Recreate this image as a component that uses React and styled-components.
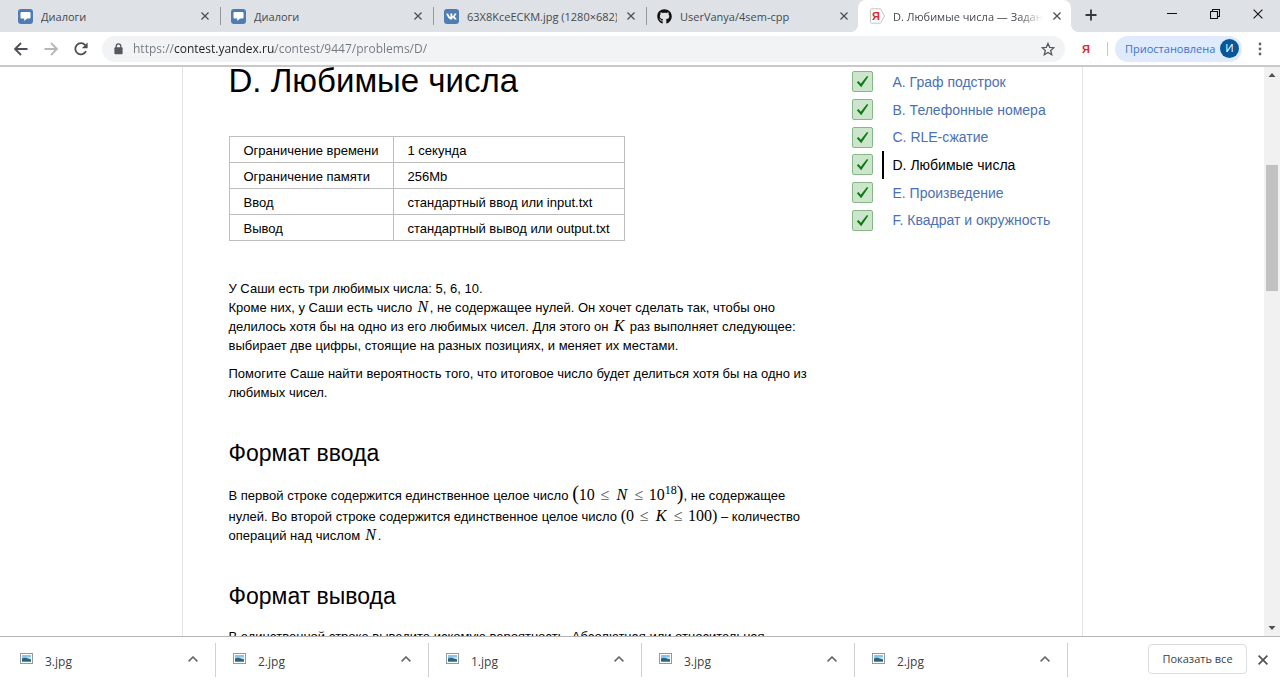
import React from "react";
import styled, { createGlobalStyle, css } from "styled-components";
import { FaGithub, FaVk } from "react-icons/fa";

const ui = `"Open Sans", "Noto Sans", sans-serif`;
const body = `"Liberation Sans", Arial, sans-serif`;
const serif = `"Liberation Serif", "Times New Roman", serif`;

const GlobalStyle = createGlobalStyle`
  * { box-sizing: border-box; }
  html, body, #root { height: 100%; }
  body { margin: 0; background: #fff; font-family: ${body}; color: #000; }
  button { border: 0; padding: 0; background: none; font: inherit; color: inherit; }
  svg { display: block; flex: none; }
`;

const Browser = styled.div`
  display: flex;
  flex-direction: column;
  height: 100vh;
  overflow: hidden;
`;

/* ---------- tab strip ---------- */

const TabStrip = styled.header`
  display: flex;
  height: 32px;
  flex: none;
  padding: 0 1px 0 6px;
  background: #dee1e6;
  font-family: ${ui};
  font-size: 11px;
  color: #45494e;
`;

const Tab = styled.div`
  display: flex;
  align-items: center;
  gap: 8px;
  flex: 0 1 213px;
  min-width: 0;
  position: relative;
  padding: 0 8px 0 12px;
  ${({ $active }) =>
    $active &&
    css`
      background: #fff;
      border-radius: 8px 8px 0 0;
      &::before,
      &::after {
        content: "";
        position: absolute;
        bottom: 0;
        width: 8px;
        height: 8px;
      }
      &::before {
        left: -8px;
        background: radial-gradient(circle at 0 0, #dee1e6 8px, #fff 8px);
      }
      &::after {
        right: -8px;
        background: radial-gradient(circle at 100% 0, #dee1e6 8px, #fff 8px);
      }
    `}
`;

const TabDivider = styled.span`
  position: absolute;
  right: -2px;
  top: 7px;
  width: 1px;
  height: 18px;
  background: #93969b;
`;

const TabTitle = styled.span`
  flex: 1;
  min-width: 0;
  overflow: hidden;
  white-space: nowrap;
  ${({ $fade }) =>
    $fade && css`mask-image: linear-gradient(to left, transparent, #000 24px);`}
`;

const IconButton = styled.button`
  display: flex;
  align-items: center;
  justify-content: center;
  flex: none;
  width: ${({ $w }) => $w || 12}px;
  height: ${({ $h }) => $h || 30}px;
  color: ${({ $color }) => $color || "#4c4f54"};
`;

const WindowControls = styled.div`
  display: flex;
  margin-left: auto;
  height: 28px;
  color: #111;
`;

const BlueBadge = styled.span`
  display: flex;
  align-items: center;
  justify-content: center;
  flex: none;
  width: 15px;
  height: 15px;
  border-radius: 3px;
  background: #4f7db3;
  color: #fff;
`;

/* ---------- toolbar ---------- */

const Toolbar = styled.div`
  display: flex;
  align-items: center;
  flex: none;
  height: 35px;
  padding: 0 2px 0 6px;
  background: #fff;
  border-bottom: 2px solid #c9c9c9;
  font-family: ${ui};
`;

const Omnibox = styled.form`
  display: flex;
  align-items: center;
  flex: 1;
  min-width: 0;
  height: 26px;
  margin-left: 6px;
  padding: 0 7px 0 12px;
  gap: 10px;
  border-radius: 13px;
  background: #f1f3f4;
`;

const Address = styled.input`
  flex: 1;
  min-width: 0;
  height: 26px;
  padding: 0;
  border: 0;
  outline: 0;
  font-family: ${ui};
  font-size: 12px;
  background: linear-gradient(90deg, #73777c 41px, #202124 41px, #202124 142px, #73777c 142px);
  background-clip: text;
  -webkit-background-clip: text;
  -webkit-text-fill-color: transparent;
`;

const Divider = styled.span`
  width: 1px;
  height: 14px;
  margin-right: 7px;
  background: #c4c7cb;
`;

const Profile = styled.button`
  && {
    display: flex;
    align-items: center;
    justify-content: space-between;
    width: 127px;
    height: 26px;
    padding: 0 3px 0 10px;
    border-radius: 13px;
    background: #dfeafc;
    color: #3a72d0;
    font-size: 11px;
    white-space: nowrap;
  }
`;

const Avatar = styled.span`
  flex: none;
  width: 19px;
  height: 19px;
  border-radius: 50%;
  background: #07579b;
  color: #fff;
  font-size: 11px;
  line-height: 18px;
  text-align: center;
`;

const YandexMark = styled.span`
  color: #e3262b;
  font: bold 11px ${body};
`;

/* ---------- page ---------- */

const Viewport = styled.div`
  display: flex;
  flex: 1;
  min-height: 0;
`;

const Page = styled.div`
  flex: 1;
  min-width: 0;
  overflow: hidden;
`;

const Sheet = styled.div`
  display: flex;
  align-items: flex-start;
  max-width: 901px;
  min-height: 100%;
  margin: 0 auto;
  padding: 0 20px 0 46px;
  gap: 32px;
  border: solid #e4e4e4;
  border-width: 0 1px;
`;

const Problem = styled.main`
  flex: 1;
  min-width: 0;
  font-size: 13px;
  line-height: 19px;
`;

const Title = styled.h1`
  margin: 0 0 41px;
  font-size: 33px;
  font-weight: 400;
  line-height: 28px;
`;

const Limits = styled.table`
  margin-bottom: 38px;
  border-collapse: collapse;
  line-height: 17px;
  th, td {
    height: 26px;
    padding: 5px 14px 3px 14px;
    border: 1px solid #bdbdbd;
    font-weight: 400;
    text-align: left;
  }
`;

const Heading = styled.h2`
  margin: 37px 0 17px;
  font-size: 23px;
  font-weight: 400;
  line-height: 28px;
`;

const Text = styled.p`
  margin: 0 0 9px;
`;

const Formula = styled.span`
  font-family: ${serif};
  font-size: 16px;
  line-height: 16px;
  white-space: nowrap;
  ${({ $tall }) => $tall && css`display: inline-block; line-height: 21px;`}
  sup {
    font-size: 12px;
    line-height: 0;
  }
`;

const BigParen = styled.span`
  font-size: 20px;
  line-height: 16px;
`;

const Variable = styled.i`
  display: inline-block;
  width: 14px;
  text-align: center;
`;

const Relation = styled.span`
  display: inline-block;
  width: 20px;
  text-align: center;
  color: #555;
`;

const ProblemList = styled.nav`
  display: grid;
  grid-template-rows: repeat(6, minmax(0, 1fr));
  flex: none;
  width: 210px;
  height: 166px;
  margin-top: 1px;
  font-size: 14px;
`;

const ProblemRow = styled.div`
  display: flex;
  align-items: center;
  gap: 9px;
`;

const Solved = styled.span`
  display: flex;
  align-items: center;
  justify-content: center;
  width: 21px;
  height: 21px;
  border: 1px solid #86b886;
  border-radius: 2px;
  background: #cce5cc;
`;

const ProblemLink = styled.a`
  padding-left: 9px;
  border-left: 2px solid ${({ $current }) => ($current ? "#000" : "transparent")};
  color: ${({ $current }) => ($current ? "#000" : "#4a70b5")};
  line-height: 28px;
  text-decoration: none;
  white-space: nowrap;
`;

/* ---------- scrollbar ---------- */

const Scrollbar = styled.div`
  display: flex;
  flex-direction: column;
  flex: none;
  width: 16px;
  padding: 0 2px;
  background: #f1f1f1;
  color: #505050;
`;

const Track = styled.div`
  flex: ${({ $part }) => $part} 1 0;
`;

const Thumb = styled(Track)`
  background: #c1c1c1;
`;

/* ---------- downloads ---------- */

const Downloads = styled.footer`
  display: flex;
  align-items: center;
  flex: none;
  height: 46px;
  padding: 0 9px 0 3px;
  border-top: 1px solid #b5b5b5;
  background: #fff;
  font-family: ${ui};
  font-size: 12px;
  color: #3c4043;
`;

const Download = styled.div`
  display: flex;
  align-items: center;
  flex: 0 1 213px;
  min-width: 0;
  height: 34px;
  padding: 0 16px 2px 17px;
  border-right: 1px solid #d0d0d0;
`;

const FileName = styled.span`
  flex: 1;
  padding: 6px 0 0 12px;
`;

const ShowAll = styled.button`
  && {
    width: 99px;
    height: 30px;
    margin: 0 8px 2px auto;
    border: 1px solid #dadce0;
    border-radius: 4px;
    font-size: 11px;
    font-weight: 500;
    white-space: nowrap;
  }
`;

/* ---------- drawings ---------- */

const Cross = ({ size = 8, weight = 1.6 }) => (
  <svg width={size} height={size} viewBox="0 0 10 10" stroke="currentColor" strokeWidth={weight} fill="none">
    <path d="M.6.6l8.8 8.8M9.4.6L.6 9.4" />
  </svg>
);

const Arrow = ({ flip }) => (
  <svg width="14" height="14" viewBox="0 0 14 14" fill="none" stroke="currentColor" strokeWidth="1.8">
    <path d={flip ? "M.5 7h12M7 1l6 6-6 6" : "M13.5 7h-12M7 1L1 7l6 6"} />
  </svg>
);

const Reload = () => (
  <svg width="14" height="14" viewBox="0 0 14 14" fill="none" stroke="currentColor" strokeWidth="1.8">
    <path d="M12 9.2A5.6 5.6 0 1 1 11.2 3.2" />
    <path d="M13.6.4v5.8H7.8z" fill="currentColor" stroke="none" />
  </svg>
);

const Lock = () => (
  <svg width="9" height="12" viewBox="0 0 9 12">
    <path d="M2.2 5V3.2a2.3 2.3 0 0 1 4.6 0V5" fill="none" stroke="#55585c" strokeWidth="1.3" />
    <rect x=".4" y="4.3" width="8.2" height="7" rx="1" fill="#55585c" />
  </svg>
);

const Star = () => (
  <svg width="14" height="14" viewBox="0 0 14 14" fill="none" stroke="#55585c" strokeWidth="1.3">
    <path d="M7 1.4l1.7 3.9 4.2.4-3.2 2.8 1 4.2L7 10.5l-3.7 2.2 1-4.2L1.1 5.7l4.2-.4z" />
  </svg>
);

const Plus = () => (
  <svg width="12" height="12" viewBox="0 0 12 12" stroke="#34373b" strokeWidth="1.8">
    <path d="M6 .5v11M.5 6h11" />
  </svg>
);

const Kebab = () => (
  <svg width="4" height="14" viewBox="0 0 4 14" fill="#5f6368">
    <circle cx="2" cy="2" r="1.4" />
    <circle cx="2" cy="7" r="1.4" />
    <circle cx="2" cy="12" r="1.4" />
  </svg>
);

const Minimize = () => (
  <svg width="10" height="10" viewBox="0 0 10 10" stroke="currentColor">
    <path d="M0 4.5h10" />
  </svg>
);

const Restore = () => (
  <svg width="10" height="10" viewBox="0 0 10 10" fill="none" stroke="currentColor" strokeWidth="1.1">
    <path d="M.5 2.5h7v7h-7zM2.5 2.5v-2h7v7h-2" />
  </svg>
);

const Chevron = () => (
  <svg width="10" height="6" viewBox="0 0 10 6" fill="none" stroke="#5f6368" strokeWidth="1.5">
    <path d="M.6 5.4L5 1l4.400 4.400" />
  </svg>
);

const ScrollArrow = ({ down }) => (
  <svg width="12" height="16" viewBox="0 0 12 16" fill="currentColor">
    <path d={down ? "M2.500 6h7L6 10z" : "M2.500 10h7L6 6z"} />
  </svg>
);

const CheckMark = () => (
  <svg width="13" height="13" viewBox="0 0 13 13">
    <path d="M.8 7.300l1.700-1.200 2.300 2.600L11 1l1.300.7L5.200 12.300z" fill="#0a7d12" />
  </svg>
);

const Picture = () => (
  <svg width="13" height="11" viewBox="0 0 13 11">
    <rect x=".5" y=".5" width="12" height="10" fill="#fff" stroke="#8f9aa5" />
    <rect x="2" y="2" width="9" height="7" fill="#8fc4ea" />
    <path d="M2 5.500l3-.8 6 1.600V9H2z" fill="#28667a" />
    <path d="M6 4.500h5v1.800z" fill="#dff0f8" />
    <path d="M2 8h9v1H2z" fill="#4f93c8" />
  </svg>
);

const Bubble = () => (
  <svg width="11" height="11" viewBox="0 0 11 11" fill="#fff">
    <path d="M1.500 1h8Q10.500 1 10.500 2v4.500q0 1-1 1H7L4.300 10V7.500H1.500q-1 0-1-1V2q0-1 1-1z" />
  </svg>
);

const YandexTag = () => (
  <svg width="15" height="16" viewBox="0 0 15 16">
    <path d="M1.500.8h9l4 7.200-4 7.200h-9q-1 0-1-1V1.800q0-1 1-1z" fill="#fff" stroke="#c3c3c3" />
    <text x="2" y="12" fill="#e0262b" fontFamily="Liberation Sans, sans-serif" fontSize="11" fontWeight="700">Я</text>
  </svg>
);

/* ---------- data ---------- */

const dialogs = <BlueBadge><Bubble /></BlueBadge>;

const tabs = [
  { title: "Диалоги", icon: dialogs, divider: true },
  { title: "Диалоги", icon: dialogs, divider: true },
  { title: "63X8KceECKM.jpg (1280×682)", icon: <BlueBadge><FaVk size={11} /></BlueBadge>, divider: true },
  { title: "UserVanya/4sem-cpp", icon: <FaGithub size={15} color="#111" /> },
  { title: "D. Любимые числа — Задания", icon: <YandexTag />, active: true },
];

const limits = [
  ["Ограничение времени", "1 секунда"],
  ["Ограничение памяти", "256Mb"],
  ["Ввод", "стандартный ввод или input.txt"],
  ["Вывод", "стандартный вывод или output.txt"],
];

const problems = [
  "A. Граф подстрок",
  "B. Телефонные номера",
  "C. RLE-сжатие",
  "D. Любимые числа",
  "E. Произведение",
  "F. Квадрат и окружность",
];

const files = ["3.jpg", "2.jpg", "1.jpg", "3.jpg", "2.jpg"];

const Var = ({ children }) => (
  <Formula><Variable>{children}</Variable></Formula>
);

export default function App() {
  return (
    <Browser>
      <GlobalStyle />
      <TabStrip>
        {tabs.map((tab, i) => (
          <Tab key={i} $active={tab.active}>
            {tab.icon}
            <TabTitle $fade={tab.active}>{tab.title}</TabTitle>
            <IconButton aria-label="Закрыть вкладку"><Cross /></IconButton>
            {tab.divider && <TabDivider />}
          </Tab>
        ))}
        <IconButton $w={40} aria-label="Новая вкладка"><Plus /></IconButton>
        <WindowControls>
          <IconButton $w={43} $h={28} $color="#111" aria-label="Свернуть"><Minimize /></IconButton>
          <IconButton $w={43} $h={28} $color="#111" aria-label="Восстановить"><Restore /></IconButton>
          <IconButton $w={43} $h={28} $color="#111" aria-label="Закрыть"><Cross size={10} weight={1.1} /></IconButton>
        </WindowControls>
      </TabStrip>

      <Toolbar>
        <IconButton $w={30} aria-label="Назад"><Arrow /></IconButton>
        <IconButton $w={30} $color="#b5b7ba" aria-label="Вперёд"><Arrow flip /></IconButton>
        <IconButton $w={30} aria-label="Обновить"><Reload /></IconButton>
        <Omnibox onSubmit={(e) => e.preventDefault()}>
          <Lock />
          <Address aria-label="Адрес" defaultValue="https://contest.yandex.ru/contest/9447/problems/D/" />
          <IconButton type="button" $w={20} $h={26} aria-label="В закладки"><Star /></IconButton>
        </Omnibox>
        <IconButton $w={42} aria-label="Яндекс"><YandexMark>Я</YandexMark></IconButton>
        <Divider />
        <Profile>
          Приостановлена
          <Avatar>И</Avatar>
        </Profile>
        <IconButton $w={36} aria-label="Меню"><Kebab /></IconButton>
      </Toolbar>

      <Viewport>
        <Page>
          <Sheet>
            <Problem>
              <Title>D. Любимые числа</Title>
              <Limits>
                <tbody>
                  {limits.map(([name, value]) => (
                    <tr key={name}>
                      <th scope="row">{name}</th>
                      <td>{value}</td>
                    </tr>
                  ))}
                </tbody>
              </Limits>
              <Text>
                У Саши есть три любимых числа: 5, 6, 10.
                <br />
                Кроме них, у Саши есть число <Var>N</Var>, не содержащее нулей. Он хочет сделать так, чтобы оно
                делилось хотя бы на одно из его любимых чисел. Для этого он <Var>K</Var> раз выполняет следующее:
                выбирает две цифры, стоящие на разных позициях, и меняет их местами.
              </Text>
              <Text>
                Помогите Саше найти вероятность того, что итоговое число будет делиться хотя бы на одно из
                любимых чисел.
              </Text>
              <Heading>Формат ввода</Heading>
              <Text>
                В первой строке содержится единственное целое число{" "}
                <Formula $tall>
                  <BigParen>(</BigParen>10<Relation>≤</Relation><Variable>N</Variable><Relation>≤</Relation>10<sup>18</sup><BigParen>)</BigParen>
                </Formula>
                , не содержащее нулей. Во второй строке содержится единственное целое число{" "}
                <Formula $tall>
                  (0<Relation>≤</Relation><Variable>K</Variable><Relation>≤</Relation>100)
                </Formula>{" "}
                – количество операций над числом <Var>N</Var>.
              </Text>
              <Heading>Формат вывода</Heading>
              <Text>
                В единственной строке выведите искомую вероятность. Абсолютная или относительная
              </Text>
            </Problem>
            <ProblemList aria-label="Задачи">
              {problems.map((name) => (
                <ProblemRow key={name}>
                  <Solved><CheckMark /></Solved>
                  <ProblemLink href="#" $current={name.startsWith("D")}>{name}</ProblemLink>
                </ProblemRow>
              ))}
            </ProblemList>
          </Sheet>
        </Page>
        <Scrollbar aria-hidden="true">
          <ScrollArrow />
          <Track $part={82} />
          <Thumb $part={126} />
          <Track $part={329} />
          <ScrollArrow down />
        </Scrollbar>
      </Viewport>

      <Downloads>
        {files.map((file, i) => (
          <Download key={i}>
            <Picture />
            <FileName>{file}</FileName>
            <IconButton aria-label="Действия с файлом"><Chevron /></IconButton>
          </Download>
        ))}
        <ShowAll>Показать все</ShowAll>
        <IconButton $w={16} aria-label="Закрыть панель загрузок"><Cross size={10} /></IconButton>
      </Downloads>
    </Browser>
  );
}
